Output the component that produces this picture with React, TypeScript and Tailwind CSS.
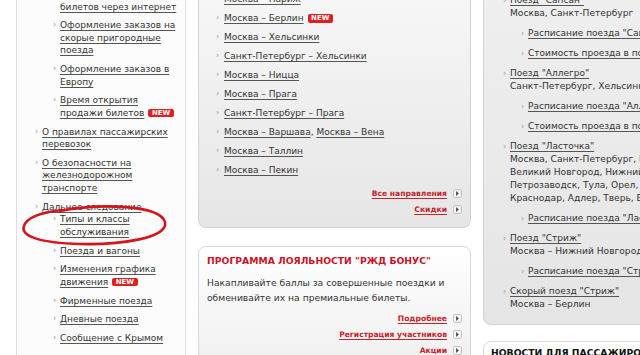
import React from "react";

const Bullet = ({ w = "w-[7px]" }: { w?: string }) => (
  <span className={`${w} shrink-0 text-[#9a9a9a] text-[8px] leading-[12.5px]`}>›</span>
);

const New = () => (
  <span className="inline-block ml-[4px] align-[1px] bg-[#e01f1f] text-white font-bold text-[7px] leading-[8.5px] px-[3.5px] rounded-[2px]">
    NEW
  </span>
);

const ArrowBox = () => (
  <span className="inline-flex items-center justify-center ml-[6px] w-[9px] h-[9px] border border-[#c4c4c4] rounded-[2px] bg-[#fafafa]">
    <svg width="3" height="5" viewBox="0 0 3 5">
      <path d="M0 0 L3 2.5 L0 5 Z" fill="#555" />
    </svg>
  </span>
);

const L = ({ children }: { children: React.ReactNode }) => (
  <span className="underline underline-offset-[1.5px] decoration-[#555] text-[#333]">{children}</span>
);

type Item = { lines: string[]; isNew?: boolean };

const LeftSub = ({ items }: { items: Item[] }) => (
  <div className="flex flex-col gap-[6.3px]">
    {items.map((it, i) => (
      <div key={i} className="flex">
        <Bullet />
        <div className="leading-[12.5px]">
          {it.lines.map((l, j) => (
            <div key={j} className="whitespace-nowrap">
              <L>{l}</L>
              {it.isNew && j === it.lines.length - 1 && <New />}
            </div>
          ))}
        </div>
      </div>
    ))}
  </div>
);

const RedLink = ({ children }: { children: React.ReactNode }) => (
  <div className="flex items-center justify-end leading-[12.5px]">
    <span className="text-[#c4252c] font-bold underline underline-offset-[1.5px] text-[7.6px]">{children}</span>
    <ArrowBox />
  </div>
);

type RItem = { title: string; desc: string[]; subs: string[] };

const rightItems: RItem[] = [
  {
    title: "Поезд \"Сапсан\"",
    desc: ["Москва, Санкт-Петербург"],
    subs: ["Расписание поезда \"Сапсан\"", "Стоимость проезда в поезде \"Сапсан\""],
  },
  {
    title: "Поезд \"Аллегро\"",
    desc: ["Санкт-Петербург, Хельсинки"],
    subs: ["Расписание поезда \"Аллегро\"", "Стоимость проезда в поезде \"Аллегро\""],
  },
  {
    title: "Поезд \"Ласточка\"",
    desc: [
      "Москва, Санкт-Петербург, Бологое,",
      "Великий Новгород, Нижний Новгород,",
      "Петрозаводск, Тула, Орел, Курск,",
      "Краснодар, Адлер, Тверь, Вязьма",
    ],
    subs: ["Расписание поезда \"Ласточка\""],
  },
  {
    title: "Поезд \"Стриж\"",
    desc: ["Москва – Нижний Новгород"],
    subs: ["Расписание поезда \"Стриж\""],
  },
  {
    title: "Скорый поезд \"Стриж\"",
    desc: ["Москва – Берлин"],
    subs: [],
  },
];

export default function App() {
  return (
    <div className="relative w-[640px] h-[355px] overflow-hidden bg-white flex items-start font-[family-name:'DejaVu_Sans',sans-serif] text-[9px] text-[#333]">
      {/* Left column */}
      <div className="ml-[16px] w-[170px] h-[400px] shrink-0 border-x border-[#dedede] bg-[#fcfcfc] -mt-[12px]">
        <div className="pl-[18px] flex flex-col gap-[6.3px]">
          <div className="pl-[18px]">
            <LeftSub
              items={[
                { lines: ["Покупка и возврат", "билетов через интернет"] },
                { lines: ["Оформление заказов на", "скорые пригородные", "поезда"] },
                { lines: ["Оформление заказов в", "Европу"] },
                { lines: ["Время открытия", "продажи билетов"], isNew: true },
              ]}
            />
          </div>
          <LeftSub
            items={[
              { lines: ["О правилах пассажирских", "перевозок"] },
              { lines: ["О безопасности на", "железнодорожном", "транспорте"] },
            ]}
          />
          <div className="flex">
            <Bullet />
            <div className="flex flex-col">
              <div className="leading-[12.5px]">
                <L>Дальнее следование</L>
              </div>
              <div className="pl-[11px]">
                <LeftSub
                  items={[
                    { lines: ["Типы и классы", "обслуживания"] },
                    { lines: ["Поезда и вагоны"] },
                    { lines: ["Изменения графика", "движения"], isNew: true },
                    { lines: ["Фирменные поезда"] },
                    { lines: ["Дневные поезда"] },
                    { lines: ["Сообщение с Крымом"] },
                  ]}
                />
              </div>
            </div>
          </div>
        </div>
      </div>

      {/* Middle column */}
      <div className="ml-[12px] w-[273px] shrink-0 flex flex-col">
        <div className="-mt-[7px] rounded-b-[8px] border border-t-0 border-[#d4d4d4] bg-linear-to-b from-[#f7f7f7] to-[#e6e6e6] pl-[17px] pr-[8px] pb-[11px]">
          <div className="flex flex-col gap-[6.5px]">
            {[
              ["Москва – Париж"],
              ["Москва – Берлин", "new"],
              ["Москва – Хельсинки"],
              ["Санкт-Петербург – Хельсинки"],
              ["Москва – Ницца"],
              ["Москва – Прага"],
              ["Санкт-Петербург – Прага"],
              ["Москва – Варшава", "vena"],
              ["Москва – Таллин"],
              ["Москва – Пекин"],
            ].map(([t, f], i) => (
              <div key={i} className="flex leading-[12.5px]">
                <Bullet w="w-[8px]" />
                <div className="whitespace-nowrap">
                  <L>{t}</L>
                  {f === "new" && <New />}
                  {f === "vena" && (
                    <>
                      , <L>Москва – Вена</L>
                    </>
                  )}
                </div>
              </div>
            ))}
          </div>
          <div className="mt-[11px] flex flex-col gap-[3.5px]">
            <RedLink>Все направления</RedLink>
            <RedLink>Скидки</RedLink>
          </div>
        </div>

        <div className="mt-[18px] rounded-t-[8px] border border-[#d8d8d8] bg-linear-to-b from-white to-[#eeeeee] pl-[8px] pr-[8px] pt-[8px] pb-[20px]">
          <div className="text-[#c8142a] font-bold text-[9.25px] leading-[12px] whitespace-nowrap">
            ПРОГРАММА ЛОЯЛЬНОСТИ "РЖД БОНУС"
          </div>
          <div className="mt-[7.5px] text-[9.2px] leading-[15px] text-[#333] whitespace-nowrap">
            Накапливайте баллы за совершенные поездки и
            <br />
            обменивайте их на премиальные билеты.
          </div>
          <div className="mt-[8px] flex flex-col gap-[3.5px]">
            <RedLink>Подробнее</RedLink>
            <RedLink>Регистрация участников</RedLink>
            <RedLink>Акции</RedLink>
          </div>
        </div>
      </div>

      {/* Right column */}
      <div className="ml-[12px] w-[240px] shrink-0 flex flex-col whitespace-nowrap">
        <div className="-mt-[6px] rounded-b-[8px] border border-t-0 border-[#d4d4d4] bg-linear-to-b from-[#efefef] to-[#e5e5e5] pl-[19px] pb-[12.5px]">
          <div className="flex flex-col gap-[7px]">
            {rightItems.map((it, i) => (
              <div key={i} className="flex">
                <span className="w-[7px] shrink-0 text-[#9a9a9a] text-[8px] leading-[13px]">›</span>
                <div className="flex flex-col leading-[13px]">
                  <div>
                    <L>{it.title}</L>
                  </div>
                  {it.desc.map((d, j) => (
                    <div key={j} className="text-[9.1px]">{d}</div>
                  ))}
                  {it.subs.length > 0 && (
                    <div className="mt-[7px] pl-[11px] flex flex-col gap-[7px]">
                      {it.subs.map((s, k) => (
                        <div key={k} className="flex">
                          <span className="w-[7px] shrink-0 text-[#9a9a9a] text-[8px] leading-[13px]">›</span>
                          <L>{s}</L>
                        </div>
                      ))}
                    </div>
                  )}
                </div>
              </div>
            ))}
          </div>
        </div>
        <div className="mt-[16px] h-[40px] rounded-t-[8px] border border-[#d8d8d8] bg-white pl-[7px] pt-[5px]">
          <div className="font-bold text-[9.25px] leading-[12px] text-[#111]">НОВОСТИ ДЛЯ ПАССАЖИРОВ</div>
        </div>
      </div>

      {/* Red hand-drawn ellipse */}
      <svg className="absolute left-0 top-0 pointer-events-none" width="200" height="260" viewBox="0 0 200 260">
        <path
          d="M60 211 C 100 203, 160 205, 165 222 C 169 238, 120 245, 80 244 C 40 243, 20 236, 24 226 C 27 216, 45 212, 62 210"
          fill="none"
          stroke="#d4151d"
          strokeWidth="2.6"
          strokeLinecap="round"
        />
      </svg>
    </div>
  );
}
